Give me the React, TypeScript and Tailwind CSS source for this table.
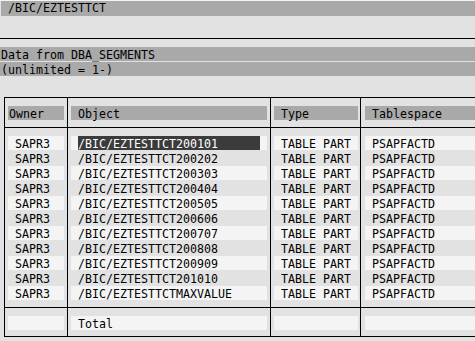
import React from "react";

const rows = [
  "200101",
  "200202",
  "200303",
  "200404",
  "200505",
  "200606",
  "200707",
  "200808",
  "200909",
  "201010",
  "MAXVALUE",
];

const mono =
  "font-['DejaVu_Sans_Mono',monospace] text-[11.63px] leading-[14px] text-black whitespace-pre";

// Tall, narrow list font: stretch the glyphs vertically around the baseline.
function T({ children }: { children: React.ReactNode }) {
  return <span className="inline-block origin-[0_11px] scale-y-[1.13]">{children}</span>;
}

function Bar({ className = "", children }: { className?: string; children?: React.ReactNode }) {
  return <div className={`h-[14px] pt-[1px] ${className}`}>{children}</div>;
}

export default function App() {
  return (
    <div className={`w-[475px] h-[341px] overflow-hidden bg-[#e2e2e2] ${mono}`}>
      <div className="h-[1px] bg-[#f4f4f4]" />
      <div className="ml-[1px] h-[15px] bg-[#a9a9a9] pl-[7px]">
        <T>/BIC/EZTESTTCT</T>
      </div>
      <div className="h-[22px]" />
      <div className="h-[1px] bg-black" />
      <div className="flex flex-col gap-[1px] pt-[8px] pb-[21px]">
        <Bar className="bg-[#a9a9a9] pl-[1px]">
          <T>Data from DBA_SEGMENTS</T>
        </Bar>
        <Bar className="bg-[#a9a9a9] pl-[1px]">
          <T>(unlimited = 1-)</T>
        </Bar>
      </div>

      <div className="ml-[4px] w-[520px] border-y border-l border-black">
        {/* column headings */}
        <div className="flex border-b border-black">
          <div className="w-[63px] border-r border-black pl-[3px] pt-[8px] pb-[7px]">
            <Bar className="w-[56px] bg-[#a9a9a9] pl-[1px]">
              <T>Owner</T>
            </Bar>
          </div>
          <div className="w-[203px] border-r border-black pl-[3px] pt-[8px] pb-[7px]">
            <Bar className="w-[196px] bg-[#a9a9a9] pl-[7px]">
              <T>Object</T>
            </Bar>
          </div>
          <div className="w-[90px] border-r border-black pl-[3px] pt-[8px] pb-[7px]">
            <Bar className="w-[84px] bg-[#a9a9a9] pl-[7px]">
              <T>Type</T>
            </Bar>
          </div>
          <div className="flex-1 pl-[4px] pt-[8px] pb-[7px]">
            <Bar className="bg-[#a9a9a9] pl-[7px]">
              <T>Tablespace</T>
            </Bar>
          </div>
        </div>

        {/* segment rows */}
        <div className="flex border-b border-black">
          <div className="flex w-[63px] flex-col gap-[1px] border-r border-black pl-[3px] pt-[8px] pb-[7px]">
            {rows.map((r, i) => (
              <Bar key={r} className={`w-[56px] pl-[7px] ${i % 2 === 0 ? "bg-[#f4f4f4]" : ""}`}>
                <T>SAPR3</T>
              </Bar>
            ))}
          </div>
          <div className="flex w-[203px] flex-col gap-[1px] border-r border-black pl-[3px] pt-[8px] pb-[7px]">
            {rows.map((r, i) => (
              <div
                key={r}
                className={`h-[14px] w-[196px] pl-[7px] ${i % 2 === 0 ? "bg-[#f4f4f4]" : ""}`}
              >
                <div className={`h-[14px] w-[182px] pt-[1px] ${i === 0 ? "bg-[#3b3b3b] text-white" : ""}`}>
                  <T>/BIC/EZTESTTCT{r}</T>
                </div>
              </div>
            ))}
          </div>
          <div className="flex w-[90px] flex-col gap-[1px] border-r border-black pl-[3px] pt-[8px] pb-[7px]">
            {rows.map((r, i) => (
              <Bar key={r} className={`w-[84px] pl-[7px] ${i % 2 === 0 ? "bg-[#f4f4f4]" : ""}`}>
                <T>TABLE PART</T>
              </Bar>
            ))}
          </div>
          <div className="flex flex-1 flex-col gap-[1px] pl-[4px] pt-[8px] pb-[7px]">
            {rows.map((r, i) => (
              <Bar key={r} className={`pl-[7px] ${i % 2 === 0 ? "bg-[#f4f4f4]" : ""}`}>
                <T>PSAPFACTD</T>
              </Bar>
            ))}
          </div>
        </div>

        {/* totals line */}
        <div className="flex">
          <div className="w-[63px] border-r border-black pl-[3px] pt-[8px] pb-[6px]">
            <Bar className="w-[56px] bg-[#f4f4f4]" />
          </div>
          <div className="w-[203px] border-r border-black pl-[3px] pt-[8px] pb-[6px]">
            <Bar className="w-[196px] bg-[#f4f4f4] pl-[7px]">
              <T>Total</T>
            </Bar>
          </div>
          <div className="w-[90px] border-r border-black pl-[3px] pt-[8px] pb-[6px]">
            <Bar className="w-[84px] bg-[#f4f4f4]" />
          </div>
          <div className="flex-1 pl-[4px] pt-[8px] pb-[6px]">
            <Bar className="bg-[#f4f4f4]" />
          </div>
        </div>
      </div>
    </div>
  );
}
